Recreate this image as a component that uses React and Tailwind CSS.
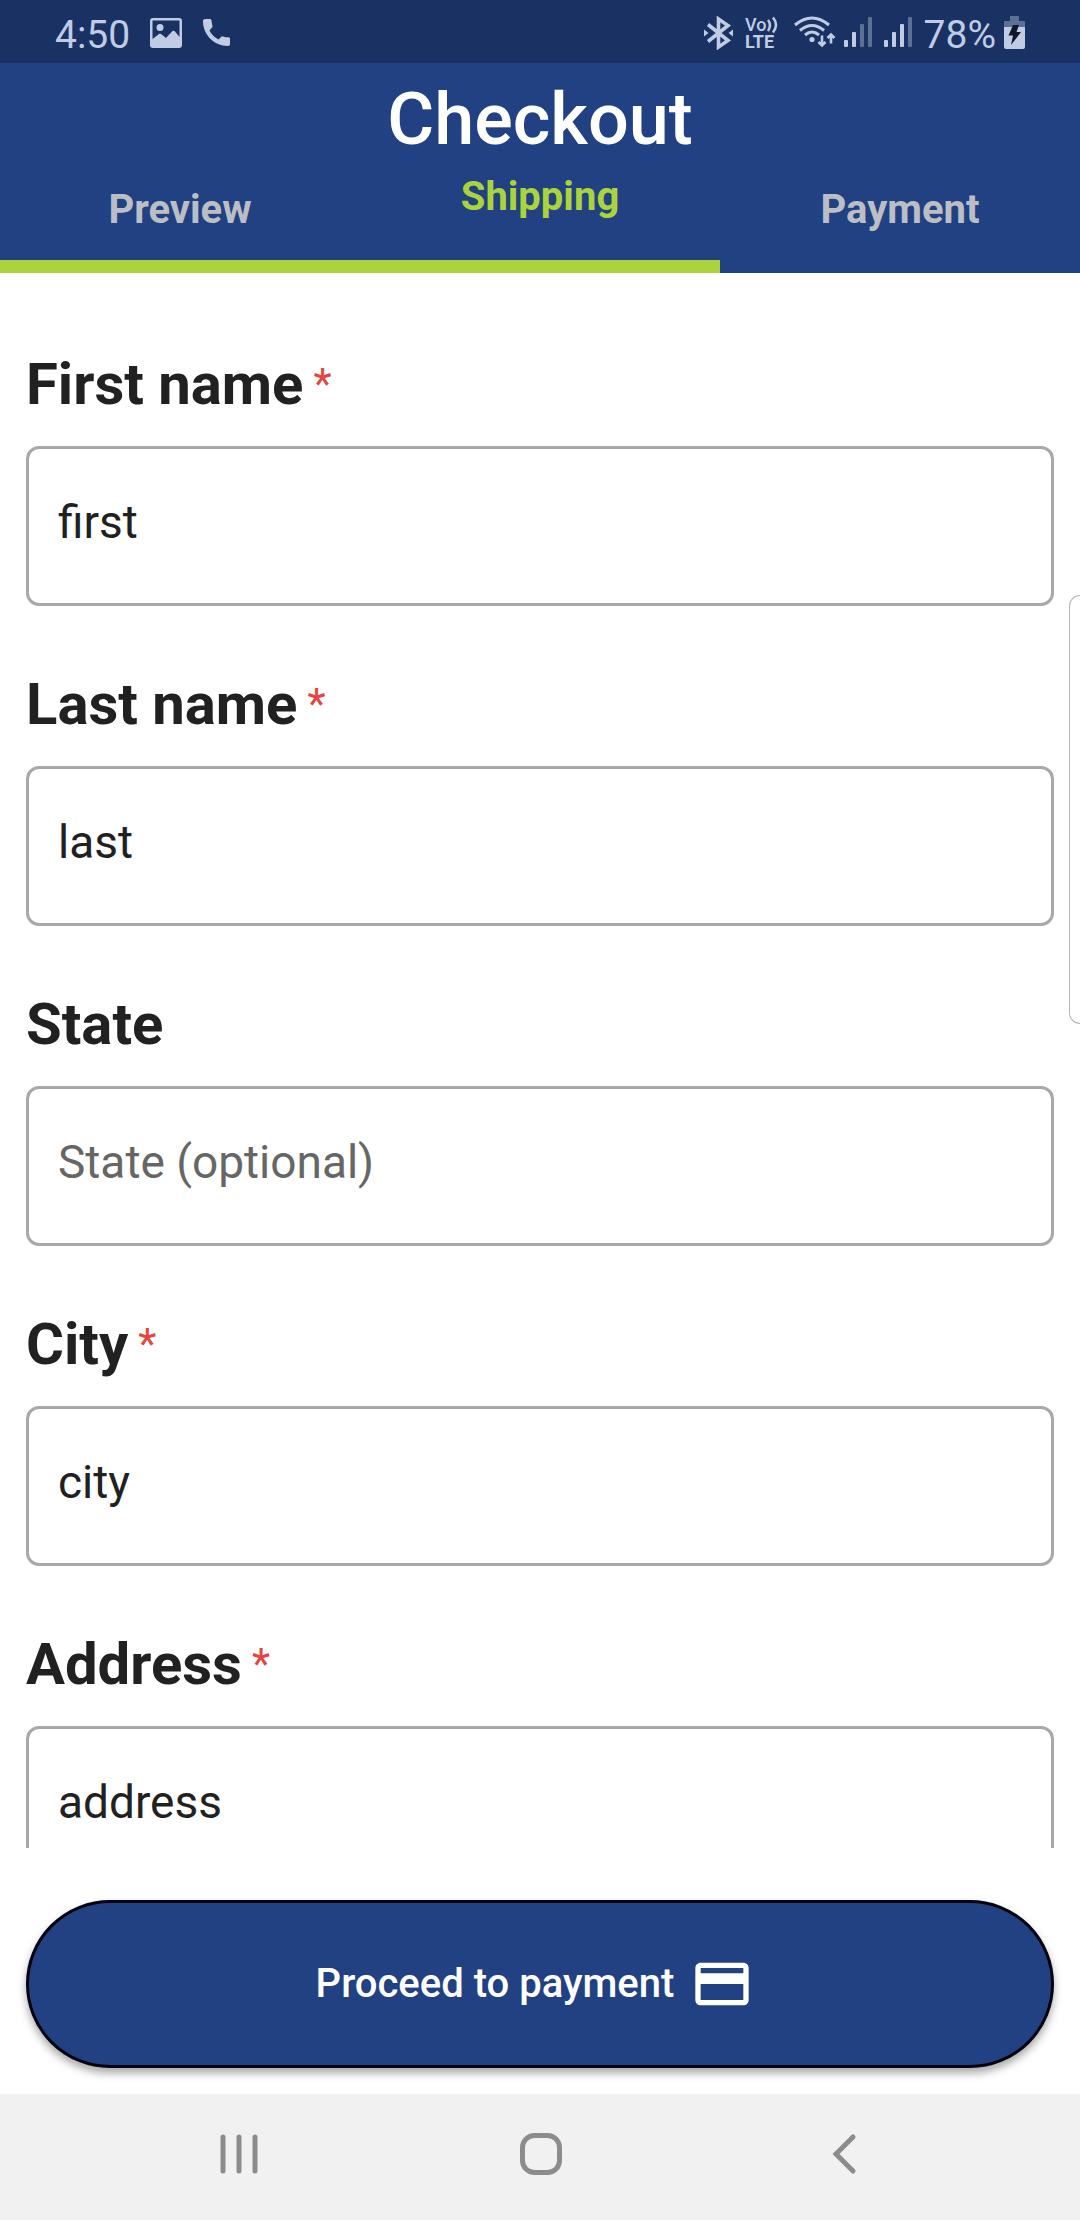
import React, { useState } from 'react';
import { MdPayment } from 'react-icons/md';

const FIELDS = [
  { id: 'firstName', label: 'First name', required: true, initial: 'first' },
  { id: 'lastName', label: 'Last name', required: true, initial: 'last' },
  { id: 'state', label: 'State', placeholder: 'State (optional)', initial: '' },
  { id: 'city', label: 'City', required: true, initial: 'city' },
  { id: 'address', label: 'Address', required: true, initial: 'address' },
];

function PictureIcon() {
  return (
    <svg width="32" height="30" viewBox="0 0 32 30" aria-hidden="true">
      <path
        fill="currentColor"
        fillRule="evenodd"
        d="M3 0h26a3 3 0 0 1 3 3v24a3 3 0 0 1-3 3H3a3 3 0 0 1-3-3V3a3 3 0 0 1 3-3zM2.500 2.500v18.500L9 16a2 2 0 0 1 2 0l5 4 6-6.500a2 2 0 0 1 3 0L29.500 19V2.500z"
      />
      <circle cx="10" cy="9.500" r="3.500" fill="currentColor" />
    </svg>
  );
}

function PhoneIcon() {
  return (
    <svg width="27" height="27" viewBox="3 3 18 18" aria-hidden="true">
      <path
        fill="currentColor"
        d="M4.500 3H7.500C8.200 3 8.600 3.400 8.700 4C8.800 5.300 9 6.500 9.300 7.600C9.400 8 9.300 8.400 9 8.700L7.300 10.600C8.600 13.200 10.700 15.300 13.300 16.600L15.200 14.900C15.500 14.600 16 14.500 16.400 14.600C17.500 15 18.700 15.200 20 15.200C20.600 15.200 21 15.600 21 16.200V19.500C21 20.400 20.500 21 19.500 21C10.500 21 3 13.500 3 4.500C3 3.500 3.600 3 4.500 3z"
      />
    </svg>
  );
}

function BluetoothIcon() {
  return (
    <svg width="29" height="34" viewBox="0 0 29 34" fill="none" stroke="currentColor" strokeWidth="3.600" aria-hidden="true">
      <path d="M4 8.500L24 24.500L14.500 31V3L24 9.500L4 25.500" />
      <path d="M0 13.500l4.500 3.500L0 20.500zM29 13.500L24.500 17l4.500 3.500z" fill="currentColor" stroke="none" />
    </svg>
  );
}

function VolteIcon() {
  return (
    <svg width="33" height="40" viewBox="0 -3 33 40" fill="currentColor" className="overflow-visible" aria-label="VoLTE">
      <text x="0" y="15" className="text-[18px] font-medium">Vo</text>
      <text x="0" y="32" className="text-[18px] font-bold">LTE</text>
      <path d="M23 4q4 5 0 11M28 1.500q6 7.500 0 15" fill="none" stroke="currentColor" strokeWidth="2.500" />
    </svg>
  );
}

function WifiIcon() {
  return (
    <svg width="42" height="34" viewBox="0 0 42 34" fill="none" stroke="currentColor" strokeWidth="3" aria-hidden="true">
      <path d="M1 9q17-14 34 0M6 14.500q12-10 24 0M11 19q7-6 14 0" />
      <circle cx="18" cy="23.500" r="2.600" fill="currentColor" stroke="none" />
      <path d="M28 19.500v10M24.500 26l3.500 3.500 3.500-3.500M37 27.500V18.500M33.500 22l3.500-3.500 3.500 3.500" strokeWidth="2.600" />
    </svg>
  );
}

function SignalIcon({ level }) {
  const bars = [24, 16, 8, 1];
  return (
    <svg width="28" height="34" viewBox="0 0 28 34" fill="currentColor" aria-hidden="true">
      {bars.map((top, i) => (
        <rect key={top} x={i * 8} y={top} width="4" height={31 - top} rx="1" opacity={i < level ? 1 : 0.4} />
      ))}
    </svg>
  );
}

function BatteryIcon() {
  return (
    <svg width="21" height="34" viewBox="0 0 21 34" aria-hidden="true">
      <path d="M6 0h9v5h5a1 1 0 0 1 1 1v5H0V6a1 1 0 0 1 1-1h5z" fill="currentColor" opacity="0.4" />
      <path d="M0 11h21v20a2 2 0 0 1-2 2H2a2 2 0 0 1-2-2z" fill="currentColor" />
      <path d="M9 9h6l-2.500 7H17L7 29l2-9.500H4.500z" fill="#10182a" />
    </svg>
  );
}

function StatusBar() {
  return (
    <div className="flex h-[63px] shrink-0 items-center justify-between bg-[#1a3263] px-[55px] pt-0.5 text-[#c0cce3]">
      <div className="flex items-center">
        <span className="pt-1 text-[39px] leading-10">4:50</span>
        <div className="ml-5 flex items-center gap-[21px]">
          <PictureIcon />
          <PhoneIcon />
        </div>
      </div>
      <div className="flex items-center">
        <div className="flex items-center gap-3">
          <BluetoothIcon />
          <VolteIcon />
        </div>
        <div className="ml-4 flex items-center gap-2">
          <WifiIcon />
          <SignalIcon level={2} />
        </div>
        <div className="ml-3 flex items-center gap-3">
          <SignalIcon level={3} />
          <span className="pt-1 text-[39px] leading-10">78%</span>
        </div>
        <div className="ml-2">
          <BatteryIcon />
        </div>
      </div>
    </div>
  );
}

function Header() {
  return (
    <header className="shrink-0 bg-[#224182] pt-[15px]">
      <h1 className="text-center text-[72px] leading-[84px] font-medium text-white">Checkout</h1>
      <nav className="mb-0.5 grid h-24 grid-cols-3 text-[40px] font-bold text-[#bbbfc5]">
        <button type="button" className="text-center">Preview</button>
        <button type="button" aria-current="step" className="pb-[26px] text-center text-[#abd43c]">Shipping</button>
        <button type="button" className="text-center">Payment</button>
      </nav>
      {/* Step progress */}
      <div className="h-[13px] w-2/3 bg-[#abd43c]" />
    </header>
  );
}

function Field({ field, value, onChange }) {
  return (
    <div>
      <label htmlFor={field.id} className="flex h-[68px] items-center gap-2.5 text-[58px] leading-[68px] font-bold text-[#212121]">
        {field.label}
        {field.required && <span className="text-[42px] font-normal text-[#e8433c]">*</span>}
      </label>
      <input
        id={field.id}
        type="text"
        value={value}
        placeholder={field.placeholder}
        required={field.required}
        onChange={(e) => onChange(field.id, e.target.value)}
        className="mt-7 block h-40 w-full rounded-[13px] border-[3px] border-[#a8a8a8] bg-white px-[29px] pb-2 text-[46px] text-[#212121] outline-none placeholder:text-[#666666]"
      />
    </div>
  );
}

function NavigationBar() {
  return (
    <div className="grid h-[126px] shrink-0 grid-cols-[1fr_302px_1fr] items-center bg-[#f1f1f1] pb-1.5 pl-0.5 text-[#8c8c8c]">
      <button type="button" aria-label="Recent apps" className="justify-self-end pr-[130px]">
        <svg width="42" height="42" viewBox="0 0 42 42" stroke="currentColor" strokeWidth="5" strokeLinecap="round">
          <path d="M5 4v34M21 4v34M37 4v34" />
        </svg>
      </button>
      <button type="button" aria-label="Home" className="justify-self-center">
        <svg width="42" height="42" viewBox="0 0 42 42" fill="none" stroke="currentColor" strokeWidth="5">
          <rect x="2.500" y="2.500" width="37" height="37" rx="12" />
        </svg>
      </button>
      <button type="button" aria-label="Back" className="justify-self-start pl-[130px]">
        <svg width="42" height="42" viewBox="0 0 42 42" fill="none" stroke="currentColor" strokeWidth="5" strokeLinecap="round">
          <path d="M31 4L14 21l17 17" />
        </svg>
      </button>
    </div>
  );
}

export default function App() {
  const [values, setValues] = useState(
    Object.fromEntries(FIELDS.map((f) => [f.id, f.initial]))
  );

  const handleChange = (id, value) => setValues((prev) => ({ ...prev, [id]: value }));

  return (
    <div className="relative flex h-screen flex-col overflow-hidden bg-white font-[Roboto,sans-serif]">
      <StatusBar />
      <Header />

      <form id="shipping" className="flex min-h-0 flex-1 flex-col gap-16 overflow-y-auto px-[26px] pt-[77px] pb-10 [scrollbar-width:none]">
        {FIELDS.map((field) => (
          <Field key={field.id} field={field} value={values[field.id]} onChange={handleChange} />
        ))}
      </form>

      <div className="shrink-0 px-[26px] pt-[52px] pb-[26px]">
        <button
          type="button"
          className="flex h-[168px] w-full items-center justify-center gap-4 rounded-full border-[3px] border-[#02030f] bg-[#224182] pr-2.5 text-[40px] font-medium text-white shadow-[0_5px_8px_rgba(0,0,0,0.35)]"
        >
          Proceed to payment
          <MdPayment size={64} />
        </button>
      </div>

      <NavigationBar />

      {/* Edge panel handle */}
      <div className="absolute top-[595px] right-0 h-[429px] w-[11px] rounded-l-[16px] border border-r-0 border-[#b4b4b4] bg-white" />
    </div>
  );
}
